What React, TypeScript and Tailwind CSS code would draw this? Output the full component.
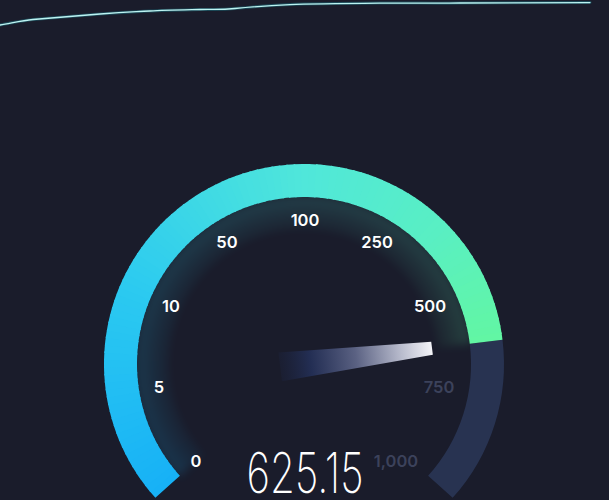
import React from 'react';

const CX = 304;
const CY = 364;
const R = 183.5;
const W = 33;
const START = -132;
const END = 132;
const VALUE = 83;

function polar(r: number, deg: number): [number, number] {
  const a = (deg * Math.PI) / 180;
  return [CX + r * Math.sin(a), CY - r * Math.cos(a)];
}

function arcPath(r: number, a0: number, a1: number) {
  const [x0, y0] = polar(r, a0);
  const [x1, y1] = polar(r, a1);
  const large = a1 - a0 > 180 ? 1 : 0;
  return `M ${x0.toFixed(2)} ${y0.toFixed(2)} A ${r} ${r} 0 ${large} 1 ${x1.toFixed(2)} ${y1.toFixed(2)}`;
}

const STOPS: [number, string][] = [
  [-132, '#17b1f6'],
  [-66, '#2ccaf0'],
  [0, '#50e7da'],
  [45, '#59efc3'],
  [83, '#62f6a3'],
];

function hexToRgb(h: string) {
  const n = parseInt(h.slice(1), 16);
  return [(n >> 16) & 255, (n >> 8) & 255, n & 255];
}

function colorAt(deg: number) {
  for (let i = 0; i < STOPS.length - 1; i++) {
    const [a0, c0] = STOPS[i];
    const [a1, c1] = STOPS[i + 1];
    if (deg <= a1 || i === STOPS.length - 2) {
      const t = Math.max(0, Math.min(1, (deg - a0) / (a1 - a0)));
      const p = hexToRgb(c0);
      const q = hexToRgb(c1);
      const r = Math.round(p[0] + (q[0] - p[0]) * t);
      const g = Math.round(p[1] + (q[1] - p[1]) * t);
      const b = Math.round(p[2] + (q[2] - p[2]) * t);
      return `rgb(${r},${g},${b})`;
    }
  }
  return STOPS[0][1];
}

const SEG = 100;
const segments = Array.from({ length: SEG }, (_, i) => {
  const step = (VALUE - START) / SEG;
  const a0 = START + i * step;
  const a1 = Math.min(VALUE, a0 + step + 0.5);
  return { a0, a1, color: colorAt(a0 + step / 2) };
});

const LABELS: { t: string; x: number; y: number; dim?: boolean }[] = [
  { t: '0', x: 196, y: 461 },
  { t: '5', x: 159, y: 387 },
  { t: '10', x: 171, y: 306 },
  { t: '50', x: 227, y: 242 },
  { t: '100', x: 305, y: 220 },
  { t: '250', x: 377, y: 242 },
  { t: '500', x: 430, y: 306 },
  { t: '750', x: 439, y: 387, dim: true },
  { t: '1,000', x: 396, y: 461, dim: true },
];

function TopChart() {
  const d =
    'M 0 25 C 12 23, 22 20.5, 33 19.5 S 70 16.5, 100 14 S 135 12, 150 11 S 185 9.8, 200 9.5 S 220 10, 235 8.5 S 270 5.5, 290 4.6 S 340 3.4, 380 3.1 S 430 3.5, 460 3 S 530 2.6, 590 2.6';
  return (
    <svg width="609" height="30" viewBox="0 0 609 30" className="block shrink-0">
      <path d={d} fill="none" stroke="#1f8f9c" strokeWidth="3" strokeOpacity="0.4" strokeLinecap="round" />
      <path d={d} fill="none" stroke="#bdf3f2" strokeWidth="1.3" strokeLinecap="round" />
    </svg>
  );
}

function Gauge() {
  return (
    <svg width="609" height="470" viewBox="0 30 609 470" className="block shrink-0">
      <defs>
        <radialGradient id="glowMask" cx={CX} cy={CY} r={167} gradientUnits="userSpaceOnUse">
          <stop offset="0.76" stopColor="#000" />
          <stop offset="1" stopColor="#fff" />
        </radialGradient>
        <mask id="ringMask" maskUnits="userSpaceOnUse" x="0" y="0" width="609" height="500">
          <rect x="0" y="0" width="609" height="500" fill="url(#glowMask)" />
        </mask>
        <linearGradient id="needleGrad" x1="-24" y1="0" x2="129" y2="0" gradientUnits="userSpaceOnUse">
          <stop offset="0" stopColor="#1d2646" stopOpacity="0.25" />
          <stop offset="0.2" stopColor="#243058" stopOpacity="0.9" />
          <stop offset="0.5" stopColor="#5b6283" />
          <stop offset="0.8" stopColor="#babdce" />
          <stop offset="1" stopColor="#f4f4f8" />
        </linearGradient>
        <filter id="soft" x="-20%" y="-20%" width="140%" height="140%">
          <feGaussianBlur stdDeviation="4" />
        </filter>
      </defs>

      {/* inner glow */}
      <g mask="url(#ringMask)" opacity="0.17" filter="url(#soft)">
        {segments.map((s, i) => (
          <path key={i} d={arcPath(150, s.a0, s.a1)} fill="none" stroke={s.color} strokeWidth="36" />
        ))}
      </g>

      {/* unfilled track */}
      <path d={arcPath(R, VALUE, END)} fill="none" stroke="#283351" strokeWidth={W} />

      {/* filled arc */}
      {segments.map((s, i) => (
        <path key={i} d={arcPath(R, s.a0, s.a1)} fill="none" stroke={s.color} strokeWidth={W} />
      ))}

      {/* labels */}
      {LABELS.map((l) => (
        <text
          key={l.t}
          x={l.x}
          y={l.y}
          textAnchor="middle"
          dominantBaseline="central"
          fontFamily="Inter, 'Noto Sans', sans-serif"
          fontWeight={600}
          fontSize="16.5"
          fill={l.dim ? '#3c425b' : '#ffffff'}
        >
          {l.t}
        </text>
      ))}

      {/* needle */}
      <g transform={`translate(${CX} ${CY}) rotate(-7)`}>
        <polygon points="-24,-14.5 129,-6.5 129,6.5 -24,14.5" fill="url(#needleGrad)" />
      </g>

      {/* reading */}
      <g transform="translate(305 493) scale(0.72 1)">
        <text
          x="0"
          y="0"
          textAnchor="middle"
          fontFamily="Inter, 'DejaVu Sans', sans-serif"
          fontWeight={200}
          fontSize="56"
          fill="#ffffff"
        >
          625.15
        </text>
      </g>
    </svg>
  );
}

export default function App() {
  return (
    <div className="w-[609px] h-[500px] overflow-hidden bg-[#1a1c2b] flex flex-col">
      <TopChart />
      <Gauge />
    </div>
  );
}
